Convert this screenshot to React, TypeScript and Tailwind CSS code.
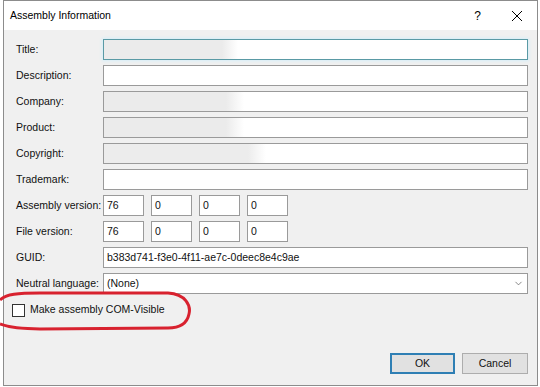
import { ChevronDown } from 'lucide-react';

const font = "font-['Liberation_Sans',Arial,sans-serif] text-[10.5px] text-[#111]";

interface FieldRowProps {
  label: string;
  value?: string;
  focused?: boolean;
  blurTo?: number;
}

function FieldRow({ label, value, focused, blurTo }: FieldRowProps) {
  const blurClass =
    blurTo === 130
      ? 'bg-[linear-gradient(to_right,#ebebeb_0,#ebebeb_118px,#ffffff_134px)]'
      : blurTo === 136
        ? 'bg-[linear-gradient(to_right,#ebebeb_0,#ebebeb_122px,#ffffff_140px)]'
        : blurTo === 158
          ? 'bg-[linear-gradient(to_right,#ececec_0,#ececec_144px,#ffffff_162px)]'
          : 'bg-white';
  return (
    <div className="flex items-center h-[21px]">
      <div className="w-[87px] shrink-0 whitespace-nowrap">{label}</div>
      <div
        className={`flex-1 h-[21px] flex items-center px-[3px] border ${blurClass} ${
          focused ? 'border-[#5a9aa5] shadow-[0_0_3px_1px_#d6eef8]' : 'border-[#9a9a9a]'
        }`}
      >
        {value}
      </div>
    </div>
  );
}

function VersionRow({ label, parts }: { label: string; parts: string[] }) {
  return (
    <div className="flex items-center h-[21px]">
      <div className="w-[87px] shrink-0 whitespace-nowrap">{label}</div>
      <div className="flex gap-[7px]">
        {parts.map((p, i) => (
          <div
            key={i}
            className="w-[41px] h-[21px] bg-white border border-[#9a9a9a] flex items-center px-[3px]"
          >
            {p}
          </div>
        ))}
      </div>
    </div>
  );
}

export default function App() {
  return (
    <div className={`relative w-[540px] h-[387px] bg-white overflow-hidden ${font}`}>
      <div className="ml-[3px] w-[535px] h-[386px] border border-[#8c8c8c] bg-[#f0f0f0] flex flex-col">
        {/* title bar */}
        <div className="h-[29px] bg-white flex items-center pl-[6px] pr-[14px] shrink-0">
          <span className="text-[10.5px] text-black">Assembly Information</span>
          <span className="ml-auto mr-[30px] text-[12px] text-black">?</span>
          <svg width="12" height="12" viewBox="0 0 12 12" className="text-black">
            <path d="M1 1 L11 11 M11 1 L1 11" stroke="currentColor" strokeWidth="1" fill="none" />
          </svg>
        </div>

        <div className="flex-1 flex flex-col pt-[9px] pl-[12px] pr-[9px] pb-[11px]">
          <div className="flex flex-col gap-[5px]">
            <FieldRow label="Title:" focused blurTo={130} />
            <FieldRow label="Description:" />
            <FieldRow label="Company:" blurTo={136} />
            <FieldRow label="Product:" blurTo={136} />
            <FieldRow label="Copyright:" blurTo={158} />
            <FieldRow label="Trademark:" />
            <VersionRow label="Assembly version:" parts={['76', '0', '0', '0']} />
            <VersionRow label="File version:" parts={['76', '0', '0', '0']} />
            <FieldRow label="GUID:" value="b383d741-f3e0-4f11-ae7c-0deec8e4c9ae" />
            <div className="flex items-center h-[21px]">
              <div className="w-[87px] shrink-0 whitespace-nowrap">Neutral language:</div>
              <div className="flex-1 h-[21px] bg-white border border-[#9a9a9a] flex items-center pl-[3px] pr-[3px]">
                <span>(None)</span>
                <ChevronDown className="ml-auto w-[11px] h-[11px] text-[#555]" strokeWidth={1.5} />
              </div>
            </div>
          </div>

          <div className="flex items-center mt-[9px] -ml-[4px] h-[14px]">
            <div className="w-[13px] h-[13px] border border-[#333] bg-white" />
            <span className="ml-[5px]">Make assembly COM-Visible</span>
          </div>

          <div className="mt-auto flex justify-end gap-[7px]">
            <button className="w-[65px] h-[21px] bg-[#e1e1e1] border-2 border-[#2f7fb4] flex items-center justify-center">
              OK
            </button>
            <button className="w-[66px] h-[21px] bg-[#e1e1e1] border border-[#adadad] flex items-center justify-center">
              Cancel
            </button>
          </div>
        </div>
      </div>

      {/* red annotation ellipse */}
      <svg className="absolute left-0 top-0 pointer-events-none" width="540" height="387">
        <path
          d="M0 300 C6 294 18 293 40 293 L168 293 C186 294 191 306 189 314 C187 324 180 328 168 328 L40 329 C20 329 8 327 0 324"
          stroke="#d8222f"
          strokeWidth="3"
          fill="none"
        />
      </svg>
    </div>
  );
}
